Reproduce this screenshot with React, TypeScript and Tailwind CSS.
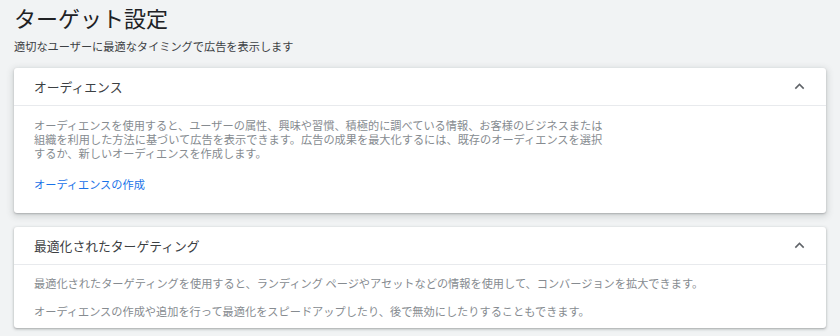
import React from 'react';

const ChevronUp: React.FC = () => (
  <svg viewBox="0 0 24 24" className="w-[19px] h-[19px] fill-[#5f6368]">
    <path d="M12 8l-6 6 1.41 1.41L12 10.83l4.59 4.58L18 14z" />
  </svg>
);

interface PanelProps {
  title: string;
  raised?: boolean;
  children: React.ReactNode;
}

const Panel: React.FC<PanelProps> = ({ title, raised, children }) => (
  <section
    className={`bg-white rounded-[3px] ${
      raised
        ? 'shadow-[0_1px_2px_rgba(60,64,67,0.3),0_2px_6px_2px_rgba(60,64,67,0.15)]'
        : 'shadow-[0_1px_2px_rgba(60,64,67,0.3),0_1px_3px_1px_rgba(60,64,67,0.12)]'
    }`}
  >
    <div className="h-[38px] flex items-center justify-between pl-[20px] pr-[17px] border-b border-[#e8eaed]">
      <h2 className="text-[12.8px] leading-[16px] text-[#3c4043]">{title}</h2>
      <ChevronUp />
    </div>
    {children}
  </section>
);

export default function App() {
  return (
    <div className="min-h-[336px] bg-[#f1f3f4] px-[14px] pt-[3px] font-['Noto_Sans_CJK_JP',sans-serif]">
      <h1 className="text-[22px] leading-[28px] text-[#202124]">ターゲット設定</h1>
      <p className="mt-[7px] text-[11.2px] leading-[16px] text-[#3c4043]">
        適切なユーザーに最適なタイミングで広告を表示します
      </p>

      <div className="mt-[14px] flex flex-col gap-[14px]">
        <Panel title="オーディエンス" raised>
          <div className="pl-[20px] pt-[12px] pb-[22px]">
            <p className="text-[11.2px] leading-[14px] text-[#868b90]">
              オーディエンスを使用すると、ユーザーの属性、興味や習慣、積極的に調べている情報、お客様のビジネスまたは
              <br />
              組織を利用した方法に基づいて広告を表示できます。広告の成果を最大化するには、既存のオーディエンスを選択
              <br />
              するか、新しいオーディエンスを作成します。
            </p>
            <a href="#" className="block mt-[17px] text-[11.2px] leading-[14px] text-[#1a73e8]">
              オーディエンスの作成
            </a>
          </div>
        </Panel>

        <Panel title="最適化されたターゲティング">
          <div className="pl-[20px] pt-[11px] pb-[10px] text-[11.2px] leading-[14px] text-[#868b90]">
            <p>
              最適化されたターゲティングを使用すると、ランディング ページやアセットなどの情報を使用して、コンバージョンを拡大できます。
            </p>
            <p className="mt-[14px]">
              オーディエンスの作成や追加を行って最適化をスピードアップしたり、後で無効にしたりすることもできます。
            </p>
          </div>
        </Panel>
      </div>
    </div>
  );
}
